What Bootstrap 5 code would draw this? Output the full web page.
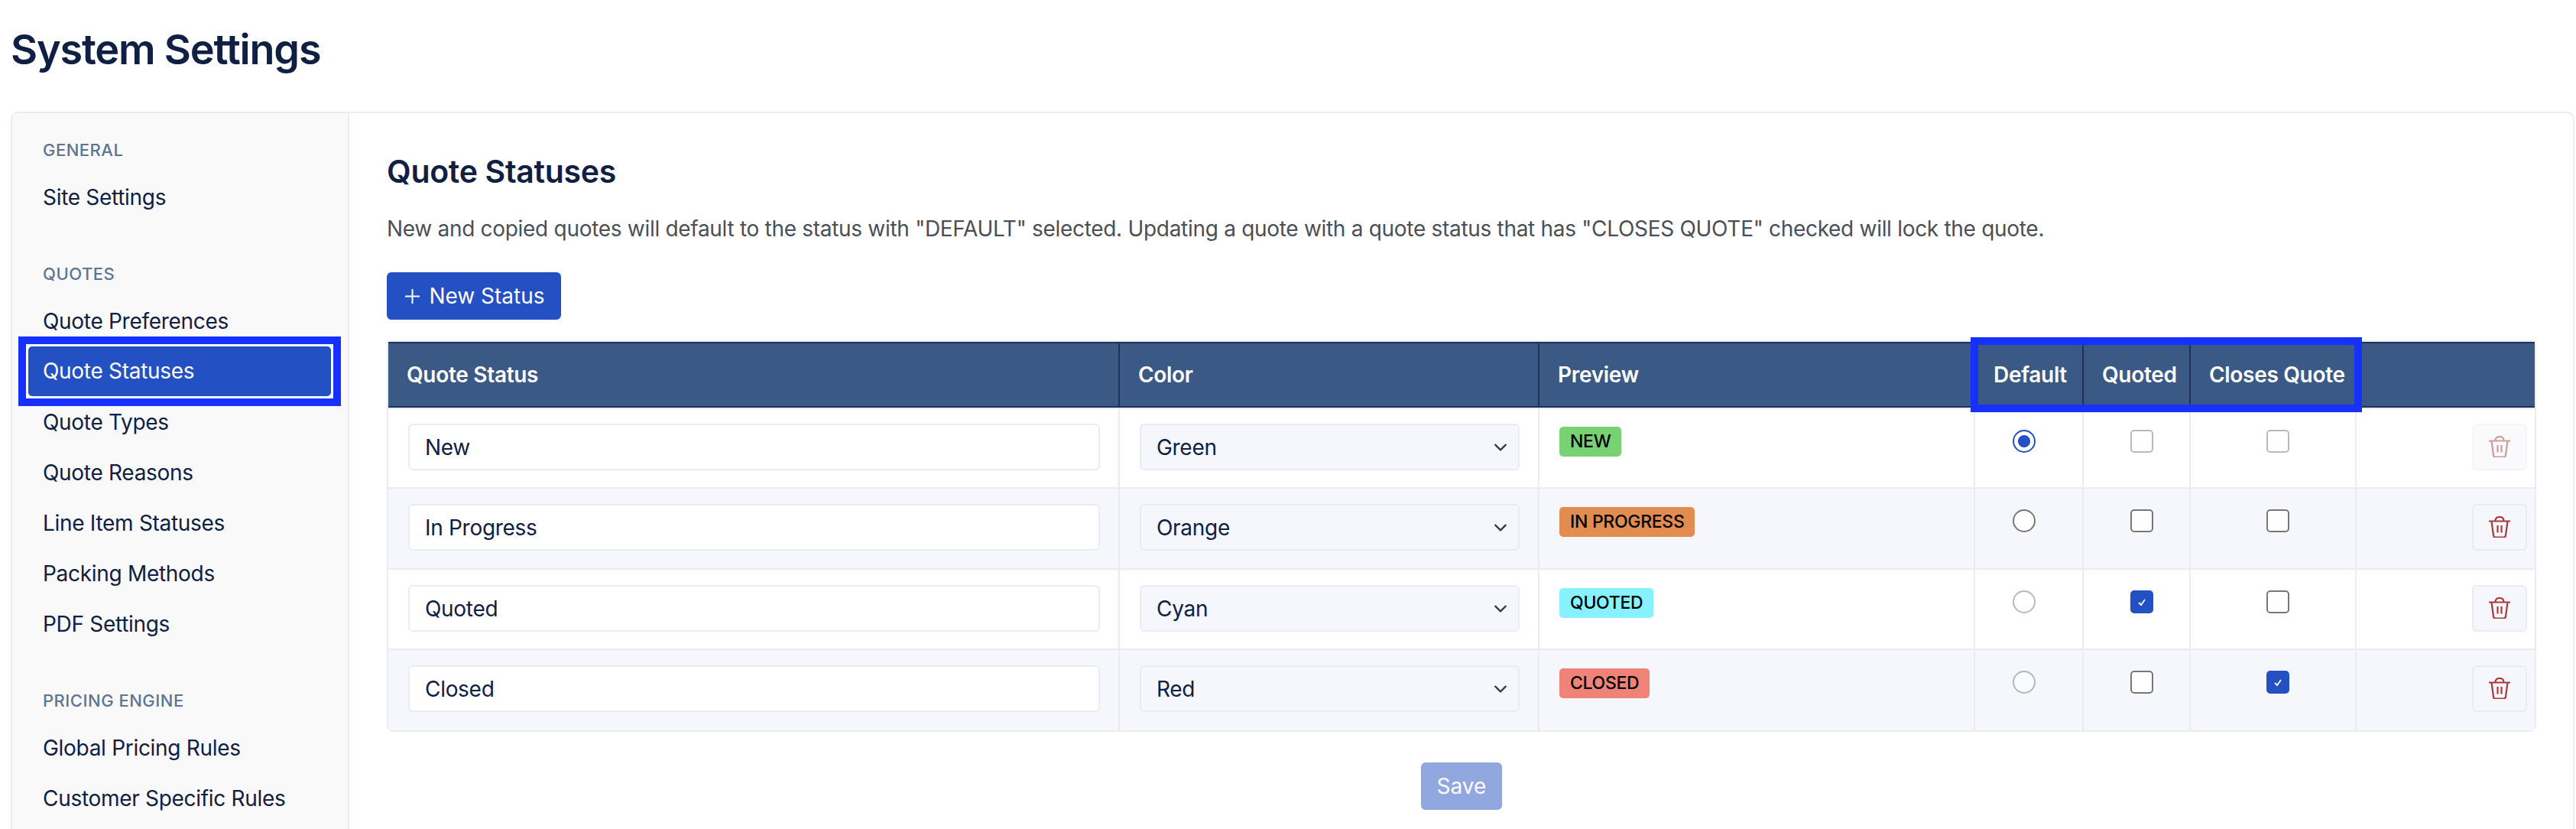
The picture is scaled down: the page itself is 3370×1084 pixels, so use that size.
<!doctype html>
<html lang="en">
<head>
<meta charset="utf-8">
<title>System Settings</title>
<link rel="stylesheet" href="https://cdn.jsdelivr.net/npm/bootstrap@5.3.0/dist/css/bootstrap.min.css">
<style>
:root{--ink:#0f2044;--bluebtn:#2350c2;--line:#e9ecf2;--zebra:#f6f7fc;--mark-blue:#1530ff}
html,body{height:1084px;overflow:hidden;background:#fff}
body{font-family:Inter,"Noto Sans",sans-serif;font-size:28px;color:var(--ink);letter-spacing:-.3px}
.page-title{font-size:54px;font-weight:600;line-height:64px;margin:0;padding:33px 0 0 14px;height:146px;letter-spacing:-1.2px}
.shell{margin:0 2px 0 14px;border:2px solid var(--line);border-bottom:0;border-radius:10px 10px 0 0;height:938px;overflow:hidden}
.side{width:441px;flex:none;background:#f9f9fa;border-right:2px solid var(--line);padding:31px 9px 0 8px}
.side-head{font-size:22px;font-weight:500;color:#5d7592;letter-spacing:.5px;line-height:34px;margin:0 0 12px 32px;text-transform:uppercase}
.side-link{display:block;height:66px;line-height:66px;padding-left:32px;color:var(--ink);text-decoration:none}
.side-group{margin-bottom:50px}
.side-mark{border:10px solid var(--mark-blue);height:91px;margin:-13px 0 -12px;position:relative}
.side-link.on{height:71px;line-height:65px;background:var(--bluebtn);color:#fff;border:3px solid #fff;border-radius:8px;padding-left:19px}
.main{flex:1;min-width:0;padding:52px 0 0 48px}
.main-title{font-size:41px;font-weight:600;line-height:48px;margin:0 0 27px 1px}
.intro{color:#4a4f57;line-height:48px;margin:0 0 33px 1px;white-space:nowrap}
.add-btn{background:var(--bluebtn);color:#fff;font-size:28px;height:62px;width:228px;padding:0 0 0 3px;margin-left:1px;border:0;border-radius:6px;display:flex;align-items:center;justify-content:center;gap:12px}
.grid-wrap{margin:27px 0 0 1px;width:2812px;border:2px solid var(--line);border-radius:8px;position:relative}
.qtable{table-layout:fixed;width:2808px;border-collapse:separate;border-spacing:0;margin:0}
.c1{width:957px}.c2{width:549px}.c3{width:570px}.c4{width:142px}.c5{width:140px}.c6{width:217px}.c7{width:233px}
.qtable th{background:#3a5985;color:#fff;font-weight:600;font-size:28px;letter-spacing:-.3px;height:86px;padding:0 24px;border-top:2px solid #1f3157;border-bottom:2px solid #1f3157;border-right:2px solid #1f3157;vertical-align:middle;white-space:nowrap}
.qtable th.last{border-right:0}
.qtable td{height:106px;padding:20px 24px 0 26px;vertical-align:top;border-bottom:2px solid var(--line);border-right:2px solid var(--line);background:#fff}
.qtable tr:nth-child(even) td{background:var(--zebra)}
.qtable tr:nth-child(n+3) td{height:105px}
.qtable tr:last-child td{border-bottom:0}
.qtable tr:first-child td{border-top:2px solid var(--line);padding-top:19px}
.qtable td.last{border-right:0;padding:20px 10px 0 0;text-align:right}
.qtable tr:first-child td.last{padding-top:19px}
.qtable td.ctr,.qtable tr:first-child td.ctr{text-align:center;padding:27px 0 0}
.qtable td.ctr.nudge-l,.qtable tr:first-child td.ctr.nudge-l{padding-right:13px}
.qtable td.ctr.nudge-r,.qtable tr:first-child td.ctr.nudge-r{padding-left:13px}
.qtable .form-control,.qtable .form-select{height:61px;font-size:28px;letter-spacing:-.3px;color:var(--ink);border:2px solid var(--line);border-radius:6px;padding:0 20px;box-shadow:none}
.qtable .form-select{background-color:var(--zebra);background-size:24px 18px;background-position:right 11px center}
.tag{display:inline-block;font-size:23px;font-weight:500;line-height:39px;height:39px;padding:0 14px;border-radius:5px;color:#000;letter-spacing:-.3px;margin-top:2px}
.tag-g{background:#79d271}.tag-o{background:#e28d4f}.tag-c{background:#88f1ff}.tag-r{background:#f08377}
.pick{display:inline-block;width:30px;height:30px;border:2px solid #777;background:#fff;vertical-align:top;position:relative}
.pick.round{border-radius:50%}
.pick.box{border-radius:5px}
.pick.off{opacity:.5}
.pick.round.sel{border-color:var(--bluebtn);background:radial-gradient(circle,var(--bluebtn) 0 7.500px,#fff 8.500px)}
.pick.box.sel{border-color:var(--bluebtn);background:var(--bluebtn)}
.pick svg{position:absolute;left:3px;top:3px;width:20px;height:20px}
.trash{width:72px;height:61px;padding:0;background:var(--zebra);border:2px solid var(--line);border-radius:6px;display:inline-flex;align-items:center;justify-content:center}
.trash svg{width:28px;height:28px;margin-top:-2px}
.trash.off{opacity:.5}
.mark-box{position:absolute;left:2070px;top:-6px;width:512px;height:98px;border:10px solid var(--mark-blue);pointer-events:none}
.save-row{display:flex;justify-content:center;margin:40px 0 0 1px;width:2812px}
.save-btn{width:106px;height:62px;padding:0;background:#91a7e0;border:0;color:#fff;font-size:28px;border-radius:6px}
</style>
</head>
<body>
<h1 class="page-title">System Settings</h1>
<div class="shell d-flex">
  <nav class="side">
    <div class="side-group">
      <div class="side-head">General</div>
      <a class="side-link" href="#">Site Settings</a>
    </div>
    <div class="side-group">
      <div class="side-head">Quotes</div>
      <a class="side-link" href="#">Quote Preferences</a>
      <div class="side-mark"><a class="side-link on" href="#">Quote Statuses</a></div>
      <a class="side-link" href="#">Quote Types</a>
      <a class="side-link" href="#">Quote Reasons</a>
      <a class="side-link" href="#">Line Item Statuses</a>
      <a class="side-link" href="#">Packing Methods</a>
      <a class="side-link" href="#">PDF Settings</a>
    </div>
    <div class="side-group">
      <div class="side-head">Pricing Engine</div>
      <a class="side-link" href="#">Global Pricing Rules</a>
      <a class="side-link" href="#">Customer Specific Rules</a>
    </div>
  </nav>
  <main class="main">
    <h2 class="main-title">Quote Statuses</h2>
    <p class="intro">New and copied quotes will default to the status with "DEFAULT" selected. Updating a quote with a quote status that has "CLOSES QUOTE" checked will lock the quote.</p>
    <button class="btn add-btn" type="button"><svg width="19" height="19" viewBox="0 0 19 19" fill="none" stroke="#fff" stroke-width="2"><path d="M9.500 0v19M0 9.500h19"/></svg>New Status</button>
    <div class="grid-wrap">
      <table class="table qtable">
        <colgroup><col class="c1"><col class="c2"><col class="c3"><col class="c4"><col class="c5"><col class="c6"><col class="c7"></colgroup>
        <thead><tr><th>Quote Status</th><th>Color</th><th>Preview</th><th>Default</th><th>Quoted</th><th>Closes Quote</th><th class="last"></th></tr></thead>
        <tbody>
          <tr>
            <td><input class="form-control" value="New"></td>
            <td><select class="form-select"><option>Green</option></select></td>
            <td><span class="tag tag-g">NEW</span></td>
            <td class="ctr nudge-l"><span class="pick round sel"></span></td>
            <td class="ctr nudge-r"><span class="pick box off"></span></td>
            <td class="ctr nudge-r"><span class="pick box off"></span></td>
            <td class="last"><button class="trash off" type="button"><svg viewBox="0 0 28 28" fill="none" stroke="#a83a3a" stroke-width="2.200"><path d="M0 6.500h28M3.500 6.500L6 25q.3 2.500 2.500 2.500h11q2.200 0 2.500-2.500l2.500-18.500M8.500 6.500q0-5.500 5.500-5.500t5.500 5.500M11.500 12v9.500M16.500 12v9.500"/></svg></button></td>
          </tr>
          <tr>
            <td><input class="form-control" value="In Progress"></td>
            <td><select class="form-select"><option>Orange</option></select></td>
            <td><span class="tag tag-o">IN PROGRESS</span></td>
            <td class="ctr nudge-l"><span class="pick round"></span></td>
            <td class="ctr nudge-r"><span class="pick box"></span></td>
            <td class="ctr nudge-r"><span class="pick box"></span></td>
            <td class="last"><button class="trash" type="button"><svg viewBox="0 0 28 28" fill="none" stroke="#a83a3a" stroke-width="2.200"><path d="M0 6.500h28M3.500 6.500L6 25q.3 2.500 2.500 2.500h11q2.200 0 2.500-2.500l2.500-18.500M8.500 6.500q0-5.500 5.500-5.500t5.500 5.500M11.500 12v9.500M16.500 12v9.500"/></svg></button></td>
          </tr>
          <tr>
            <td><input class="form-control" value="Quoted"></td>
            <td><select class="form-select"><option>Cyan</option></select></td>
            <td><span class="tag tag-c">QUOTED</span></td>
            <td class="ctr nudge-l"><span class="pick round off"></span></td>
            <td class="ctr nudge-r"><span class="pick box sel"><svg viewBox="0 0 20 20" fill="none" stroke="#fff" stroke-width="1.800"><path d="M6 11l3 3 5-7"/></svg></span></td>
            <td class="ctr nudge-r"><span class="pick box"></span></td>
            <td class="last"><button class="trash" type="button"><svg viewBox="0 0 28 28" fill="none" stroke="#a83a3a" stroke-width="2.200"><path d="M0 6.500h28M3.500 6.500L6 25q.3 2.500 2.500 2.500h11q2.200 0 2.500-2.500l2.500-18.500M8.500 6.500q0-5.500 5.500-5.500t5.500 5.500M11.500 12v9.500M16.500 12v9.500"/></svg></button></td>
          </tr>
          <tr>
            <td><input class="form-control" value="Closed"></td>
            <td><select class="form-select"><option>Red</option></select></td>
            <td><span class="tag tag-r">CLOSED</span></td>
            <td class="ctr nudge-l"><span class="pick round off"></span></td>
            <td class="ctr nudge-r"><span class="pick box"></span></td>
            <td class="ctr nudge-r"><span class="pick box sel"><svg viewBox="0 0 20 20" fill="none" stroke="#fff" stroke-width="1.800"><path d="M6 11l3 3 5-7"/></svg></span></td>
            <td class="last"><button class="trash" type="button"><svg viewBox="0 0 28 28" fill="none" stroke="#a83a3a" stroke-width="2.200"><path d="M0 6.500h28M3.500 6.500L6 25q.3 2.500 2.500 2.500h11q2.200 0 2.500-2.500l2.500-18.500M8.500 6.500q0-5.500 5.500-5.500t5.500 5.500M11.500 12v9.500M16.500 12v9.500"/></svg></button></td>
          </tr>
        </tbody>
      </table>
      <div class="mark-box"></div>
    </div>
    <div class="save-row"><button class="btn save-btn" type="button">Save</button></div>
  </main>
</div>
<script src="https://cdn.jsdelivr.net/npm/bootstrap@5.3.0/dist/js/bootstrap.bundle.min.js"></script>
</body>
</html>
